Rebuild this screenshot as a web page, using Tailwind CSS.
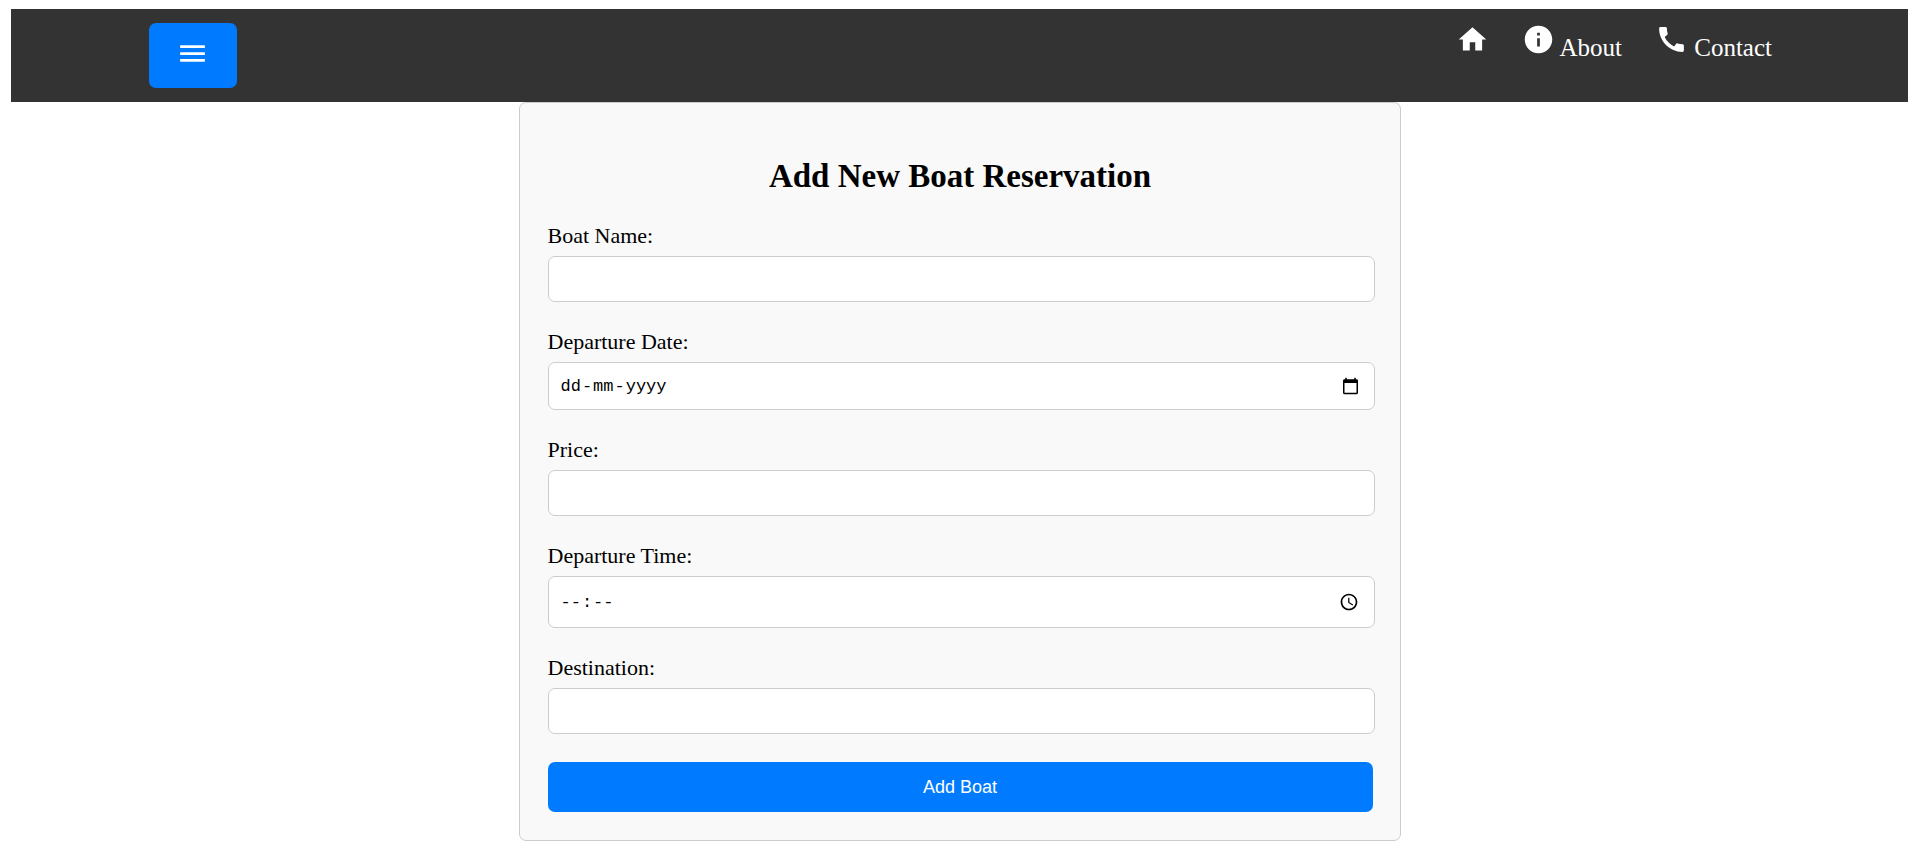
<!DOCTYPE html>
<html lang="en-IN">
<head>
<meta charset="utf-8">
<meta name="viewport" content="width=device-width, initial-scale=1">
<title>Add New Boat Reservation</title>
<script src="https://cdn.jsdelivr.net/npm/@tailwindcss/browser@4"></script>
</head>
<body class="bg-white pt-[9px] pl-[11px] font-['Liberation_Serif',serif] text-black">
  <header class="flex items-start justify-between bg-[#333] py-[14px] pr-[136px] pl-[138px] text-white">
    <button type="button" aria-label="Open menu" class="rounded-[7px] bg-[#007bff] pt-[14px] pr-7 pb-[18px] pl-[27px]">
      <svg class="block size-[33px]" viewBox="0 0 24 24" fill="currentColor" aria-hidden="true"><path d="M3 18h18v-2H3v2zm0-5h18v-2H3v2zm0-7v2h18V6H3z"/></svg>
    </button>
    <nav aria-label="Main" class="flex items-start gap-[33px] text-[25px] leading-[29px]">
      <a href="#home" aria-label="Home"><svg class="inline-block size-[33px] align-baseline" viewBox="0 0 24 24" fill="currentColor" aria-hidden="true"><path d="M10 20v-6h4v6h5v-8h3L12 3 2 12h3v8z"/></svg></a>
      <a href="#about"><svg class="inline-block size-[33px] align-baseline" viewBox="0 0 24 24" fill="currentColor" aria-hidden="true"><path d="M12 2C6.48 2 2 6.48 2 12s4.480 10 10 10 10-4.480 10-10S17.520 2 12 2zm1 15h-2v-6h2v6zm0-8h-2V7h2v2z"/></svg> About</a>
      <a href="#contact"><svg class="inline-block size-[33px] align-baseline" viewBox="0 0 24 24" fill="currentColor" aria-hidden="true"><path d="M20.010 15.380c-1.230 0-2.420-.2-3.530-.56-.35-.12-.74-.03-1.010.24l-1.570 1.970c-2.830-1.350-5.480-3.900-6.890-6.830l1.950-1.660c.27-.28.35-.67.24-1.020-.37-1.110-.56-2.300-.56-3.530 0-.54-.45-.99-.99-.99H4.190C3.650 3 3 3.240 3 3.990 3 13.280 10.730 21 20.010 21c.71 0 .99-.63.99-1.180v-3.450c0-.54-.45-.99-.99-.99z"/></svg> Contact</a>
    </nav>
  </header>
  <main>
    <form class="mx-auto max-w-[882px] rounded-[7px] border border-[#ccc] bg-[#f9f9f9] pt-[54px] pr-[27px] pb-7 pl-7">
      <h2 class="mb-7 text-center text-[33px] leading-[38px] font-bold">Add New Boat Reservation</h2>
      <div class="-mr-0.5 flex flex-col gap-[27px] text-[22px] leading-[25px]">
        <div>
          <label for="boat" class="mb-2 block">Boat Name:</label>
          <input id="boat" type="text" class="block h-[46px] w-full rounded-[7px] border border-[#ccc] bg-white px-3 text-[18px]">
        </div>
        <div>
          <label for="date" class="mb-2 block">Departure Date:</label>
          <div class="relative">
            <input id="date" type="date" required class="peer block h-12 w-full rounded-[7px] border border-[#ccc] bg-white px-3 font-['Liberation_Mono',monospace] text-[19px] text-transparent valid:text-black focus:text-black">
            <span aria-hidden="true" class="pointer-events-none absolute inset-y-0 left-[13px] flex items-center gap-px font-['Liberation_Mono',monospace] text-[17px] peer-valid:hidden peer-focus:hidden"><span>dd</span><span>-</span><span>mm</span><span>-</span><span>yyyy</span></span>
          </div>
        </div>
        <div>
          <label for="price" class="mb-2 block">Price:</label>
          <input id="price" type="text" inputmode="decimal" class="block h-[46px] w-full rounded-[7px] border border-[#ccc] bg-white px-3 text-[18px]">
        </div>
        <div>
          <label for="time" class="mb-2 block">Departure Time:</label>
          <div class="relative">
            <input id="time" type="time" required class="peer block h-[52px] w-full rounded-[7px] border border-[#ccc] bg-white px-3 font-['Liberation_Mono',monospace] text-[19px] text-transparent valid:text-black focus:text-black">
            <span aria-hidden="true" class="pointer-events-none absolute inset-y-0 left-[13px] flex items-center gap-px font-['Liberation_Mono',monospace] text-[17px] peer-valid:hidden peer-focus:hidden"><span>--</span><span>:</span><span>--</span></span>
          </div>
        </div>
        <div>
          <label for="destination" class="mb-2 block">Destination:</label>
          <input id="destination" type="text" class="block h-[46px] w-full rounded-[7px] border border-[#ccc] bg-white px-3 text-[18px]">
        </div>
      </div>
      <button type="submit" class="mt-7 block h-[50px] w-full rounded-[7px] bg-[#007bff] font-['Liberation_Sans',sans-serif] text-[18px] text-white">Add Boat</button>
    </form>
  </main>
</body>
</html>
